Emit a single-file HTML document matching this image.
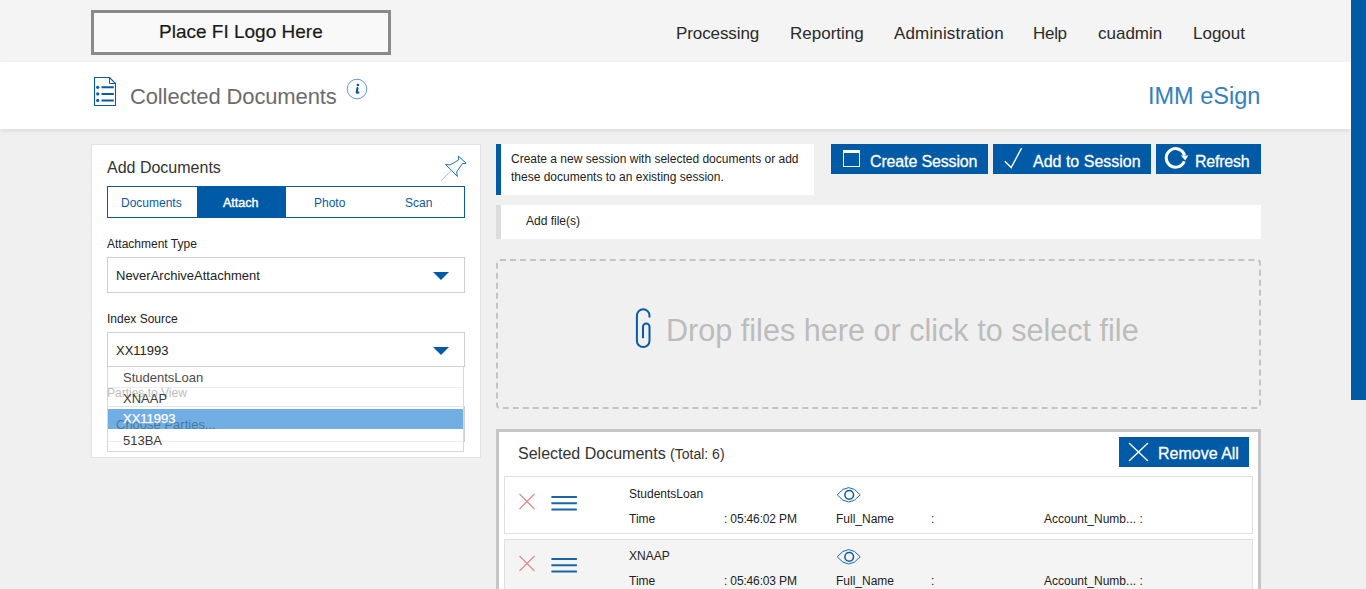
<!DOCTYPE html>
<html><head><meta charset="utf-8">
<style>
*{box-sizing:border-box;margin:0;padding:0}
html,body{width:1366px;height:589px;overflow:hidden}
body{background:#f0f0f0;font-family:"Liberation Sans",sans-serif;color:#222;position:relative}
.a{position:absolute;white-space:nowrap}
#hdr{position:absolute;left:0;top:0;width:1351px;height:62px;background:#f4f4f4}
#logo{position:absolute;left:91px;top:10px;width:300px;height:45px;border:3px solid #8a8a8a;background:#f9f9f9}
#logo span{position:absolute;left:65px;top:8px;font-size:19px;color:#1a1a1a;-webkit-text-stroke:0.2px #1a1a1a}
.nav{position:absolute;top:24px;font-size:17px;color:#2a2a2a}
#tbar{position:absolute;left:0;top:62px;width:1351px;height:67px;background:#fff;box-shadow:0 2px 5px rgba(0,0,0,0.09)}
#sb{position:absolute;left:1351px;top:0;width:15px;height:400px;background:#005aa6}
#sbt{position:absolute;left:1351px;top:400px;width:15px;height:189px;background:#f0f0f0}
.panel{position:absolute;background:#fff}
.blue{color:#0a5aa5}
.btn{position:absolute;background:#005aa6;color:#fff}
</style></head><body>
<div id="hdr">
  <div id="logo"><span>Place FI Logo Here</span></div>
  <span class="nav" style="left:676px;letter-spacing:-0.1px">Processing</span>
  <span class="nav" style="left:790px">Reporting</span>
  <span class="nav" style="left:894px;letter-spacing:0.15px">Administration</span>
  <span class="nav" style="left:1033px;letter-spacing:-0.3px">Help</span>
  <span class="nav" style="left:1098px">cuadmin</span>
  <span class="nav" style="left:1193px">Logout</span>
</div>
<div id="tbar">
  <svg class="a" style="left:92px;top:15px" width="27" height="31" viewBox="0 0 27 31">
    <path d="M2.5,0.5 H17.5 L23.5,6.5 V28.5 H2.5 Z" fill="none" stroke="#0a5aa5" stroke-width="1.1"/>
    <path d="M17.5,0.5 V6.5 H23.5" fill="none" stroke="#0a5aa5" stroke-width="1"/>
    <circle cx="5.7" cy="10.3" r="1.6" fill="#0a5aa5"/>
    <circle cx="5.7" cy="16.9" r="1.6" fill="#0a5aa5"/>
    <circle cx="5.7" cy="23.4" r="1.6" fill="#0a5aa5"/>
    <path d="M9.5,10.3 H21.8 M9.5,16.9 H21.8 M9.5,23.4 H21.8" stroke="#0a5aa5" stroke-width="2"/>
  </svg>
  <span class="a" style="left:130px;top:22px;font-size:22px;color:#6c6c6c;letter-spacing:-0.13px">Collected Documents</span>
  <svg class="a" style="left:346px;top:16px" width="22" height="22" viewBox="0 0 22 22">
    <circle cx="11" cy="11" r="9.8" fill="none" stroke="#3a82c2" stroke-width="0.8"/>
    <circle cx="11.9" cy="7" r="1.35" fill="#0a5aa5"/><path d="M11.5,10 L10.7,14.3 Q10.6,15.1 12.4,14.5" fill="none" stroke="#0a5aa5" stroke-width="2.1" stroke-linecap="round"/>
  </svg>
  <span class="a" style="left:1148px;top:21px;font-size:23.5px;color:#3380bf">IMM eSign</span>
</div>
<div id="sb"></div>

<!-- Left panel -->
<div class="panel" style="left:91px;top:144px;width:390px;height:314px;border:1px solid #e2e2e2">
</div>
<span class="a" style="left:107px;top:159px;font-size:16px;color:#333">Add Documents</span>
<svg class="a" style="left:435px;top:148px" width="40" height="40" viewBox="435 148 40 40">
  <path d="M458.4,156.1 L466.2,163.3 L462.3,163.6 L456.6,172 L457.4,176.5 L445.5,164.3 L450,165 L458.6,160 Z" fill="none" stroke="#2270b8" stroke-width="1" stroke-linejoin="round"/>
  <path d="M451,170.8 L441,180.8" stroke="#8aaed0" stroke-width="0.8"/>
</svg>
<div class="a" style="left:107px;top:186px;width:358px;height:32px;border:1px solid #0a5aa5;background:#fff"></div>
<div class="a" style="left:197px;top:186px;width:89px;height:32px;background:#005aa6"></div>
<span class="a blue" style="left:121px;top:196px;font-size:12px">Documents</span>
<span class="a" style="left:223px;top:196px;font-size:12.5px;color:#fff;-webkit-text-stroke:0.4px #fff">Attach</span>
<span class="a blue" style="left:314px;top:196px;font-size:12px">Photo</span>
<span class="a blue" style="left:405px;top:196px;font-size:12px">Scan</span>

<span class="a" style="left:107px;top:237px;font-size:12px;color:#222">Attachment Type</span>
<div class="a" style="left:107px;top:257px;width:358px;height:36px;border:1px solid #cfcfcf;background:#fff"></div>
<span class="a" style="left:116px;top:268px;font-size:13px;color:#222">NeverArchiveAttachment</span>
<svg class="a" style="left:433px;top:272px" width="16" height="8"><path d="M0,0 H16 L8,8 Z" fill="#005aa6"/></svg>

<span class="a" style="left:107px;top:312px;font-size:12px;color:#222">Index Source</span>
<div class="a" style="left:107px;top:332px;width:358px;height:35px;border:1px solid #cfcfcf;background:#fff"></div>
<span class="a" style="left:116px;top:343px;font-size:13px;color:#222">XX11993</span>
<svg class="a" style="left:433px;top:347px" width="16" height="8"><path d="M0,0 H16 L8,8 Z" fill="#005aa6"/></svg>

<!-- dropdown list -->
<div class="a" style="left:107px;top:367px;width:357px;height:85px;border:1px solid #d8d8d8;border-top:none;background:#fff"></div>
<div class="a" style="left:108px;top:387px;width:355px;height:1px;background:#ececec"></div>
<div class="a" style="left:107px;top:406px;width:358px;height:1px;background:#e4e4e4"></div>
<div class="a" style="left:108px;top:409px;width:355px;height:20px;background:#70aee3"></div>
<div class="a" style="left:108px;top:441px;width:355px;height:1px;background:#ececec"></div>
<div class="a" style="left:464px;top:406px;width:1px;height:36px;background:#cfcfcf"></div>
<span class="a" style="left:123px;top:370px;font-size:13px;color:#4a4a4a">StudentsLoan</span>
<span class="a" style="left:107px;top:386px;font-size:12px;color:#bdbdbd">Parties to View</span>
<span class="a" style="left:123px;top:391px;font-size:13px;color:#3a3a3a">XNAAP</span>
<span class="a" style="left:116px;top:417px;font-size:13px;color:rgba(40,70,110,0.55)">Choose Parties...</span>
<span class="a" style="left:123px;top:411px;font-size:13px;color:#fff;-webkit-text-stroke:0.25px #fff">XX11993</span>
<span class="a" style="left:123px;top:433px;font-size:13px;color:#3a3a3a">513BA</span>

<!-- info box -->
<div class="a" style="left:496px;top:144px;width:318px;height:51px;background:#fff;border-left:5px solid #005aa6"></div>
<span class="a" style="left:511px;top:150px;font-size:12px;color:#222;line-height:18px">Create a new session with selected documents or add<br>these documents to an existing session.</span>

<div class="btn" style="left:831px;top:144px;width:157px;height:30px"></div>
<div class="a" style="left:843px;top:150px;width:17px;height:17px;border:1px solid #fff;border-top:3px solid #fff"></div>
<span class="a" style="left:870px;top:153px;font-size:16px;color:#fff;-webkit-text-stroke:0.3px #fff;letter-spacing:-0.15px">Create Session</span>
<div class="btn" style="left:993px;top:144px;width:158px;height:30px"></div>
<svg class="a" style="left:1003px;top:147px" width="20" height="24" viewBox="0 0 20 24"><path d="M1.8,14.2 L8.2,20.5 L18.6,1.1" fill="none" stroke="#fff" stroke-width="1.4"/></svg>
<span class="a" style="left:1033px;top:153px;font-size:16px;color:#fff;-webkit-text-stroke:0.3px #fff">Add to Session</span>
<div class="btn" style="left:1156px;top:144px;width:105px;height:30px"></div>
<svg class="a" style="left:1164px;top:146px" width="26" height="24" viewBox="0 0 26 24"><path d="M20.24,15.18 A9.3,9.3 0 1 1 20.5,9.5" fill="none" stroke="#fff" stroke-width="3"/><path d="M16.9,9.4 L24.3,9.4 L21.2,14.4 Z" fill="#fff"/></svg>
<span class="a" style="left:1195px;top:153px;font-size:16px;color:#fff;-webkit-text-stroke:0.3px #fff;letter-spacing:-0.25px">Refresh</span>

<!-- add files -->
<div class="a" style="left:496px;top:205px;width:765px;height:34px;background:#fff;border-left:5px solid #dcdcdc"></div>
<span class="a" style="left:526px;top:214px;font-size:12px;color:#222">Add file(s)</span>

<!-- drop zone -->
<div class="a" style="left:496px;top:259px;width:765px;height:150px;border:2px dashed #c4c4c4;border-radius:4px"></div>
<svg class="a" style="left:633px;top:306px" width="22" height="45" viewBox="0 0 22 45"><path d="M10,32.3 V20.75 A3.25,3.25 0 0 1 16.5,20.75 V34.8 A6.3,6.3 0 0 1 3.9,34.8 V9.6 A6.3,6.3 0 0 1 16.5,9.6 V11.5" fill="none" stroke="#0a5aa5" stroke-width="2"/></svg>
<span class="a" style="left:666px;top:313px;font-size:30.6px;color:#bcbcbc">Drop files here or click to select file</span>

<!-- selected docs -->
<div class="a" style="left:496px;top:429px;width:765px;height:170px;background:#fff;border:3px solid #c6c6c6;border-bottom:none"></div>
<span class="a" style="left:518px;top:445px;font-size:16px;color:#333">Selected Documents <span style="font-size:14px">(Total: 6)</span></span>
<div class="btn" style="left:1119px;top:437px;width:130px;height:30px"></div>
<svg class="a" style="left:1128px;top:442px" width="22" height="20" viewBox="0 0 22 20"><path d="M1,1 L20,19 M20,1 L1,19" stroke="#fff" stroke-width="1.4"/></svg>
<span class="a" style="left:1158px;top:445px;font-size:16px;color:#fff;-webkit-text-stroke:0.3px #fff">Remove All</span>

<div class="a" style="left:504px;top:476px;width:749px;height:58px;background:#fff;border:1px solid #e0e0e0"></div>
<div class="a" style="left:504px;top:539px;width:749px;height:60px;background:#f4f4f4;border:1px solid #e0e0e0"></div>

<svg class="a" style="left:518px;top:493px" width="18" height="17" viewBox="0 0 18 17"><path d="M1.5,1 L16.5,16 M16.5,1 L1.5,16" stroke="#e08888" stroke-width="1.1"/></svg>
<svg class="a" style="left:550px;top:494px" width="28" height="17" viewBox="0 0 28 17"><path d="M1.4,3 H26.9 M1.4,9.2 H26.9 M1.4,15.4 H26.9" stroke="#1a65a8" stroke-width="2"/></svg>
<span class="a" style="left:629px;top:487px;font-size:12px;color:#222">StudentsLoan</span>
<span class="a" style="left:629px;top:512px;font-size:12px;color:#222">Time</span>
<span class="a" style="left:724px;top:512px;font-size:12px;color:#222;letter-spacing:-0.15px">: 05:46:02 PM</span>
<svg class="a" style="left:835px;top:486px" width="28" height="17" viewBox="0 0 28 17"><path d="M2.2,8.8 Q13.7,-5.6 25.2,8.8 Q13.7,23.2 2.2,8.8 Z" fill="none" stroke="#1a6ab0" stroke-width="1"/><circle cx="14.2" cy="8.8" r="4.35" fill="none" stroke="#0a5aa5" stroke-width="1.5"/></svg>
<span class="a" style="left:836px;top:512px;font-size:12px;color:#222">Full_Name</span>
<span class="a" style="left:931px;top:512px;font-size:12px;color:#222">:</span>
<span class="a" style="left:1044px;top:512px;font-size:12px;color:#222">Account_Numb... :</span>

<svg class="a" style="left:518px;top:555px" width="18" height="17" viewBox="0 0 18 17"><path d="M1.5,1 L16.5,16 M16.5,1 L1.5,16" stroke="#e08888" stroke-width="1.1"/></svg>
<svg class="a" style="left:550px;top:556px" width="28" height="17" viewBox="0 0 28 17"><path d="M1.4,3 H26.9 M1.4,9.2 H26.9 M1.4,15.4 H26.9" stroke="#1a65a8" stroke-width="2"/></svg>
<span class="a" style="left:629px;top:549px;font-size:12px;color:#222">XNAAP</span>
<span class="a" style="left:629px;top:574px;font-size:12px;color:#222">Time</span>
<span class="a" style="left:724px;top:574px;font-size:12px;color:#222;letter-spacing:-0.15px">: 05:46:03 PM</span>
<svg class="a" style="left:835px;top:548px" width="28" height="17" viewBox="0 0 28 17"><path d="M2.2,8.8 Q13.7,-5.6 25.2,8.8 Q13.7,23.2 2.2,8.8 Z" fill="none" stroke="#1a6ab0" stroke-width="1"/><circle cx="14.2" cy="8.8" r="4.35" fill="none" stroke="#0a5aa5" stroke-width="1.5"/></svg>
<span class="a" style="left:836px;top:574px;font-size:12px;color:#222">Full_Name</span>
<span class="a" style="left:931px;top:574px;font-size:12px;color:#222">:</span>
<span class="a" style="left:1044px;top:574px;font-size:12px;color:#222">Account_Numb... :</span>
</body></html>
